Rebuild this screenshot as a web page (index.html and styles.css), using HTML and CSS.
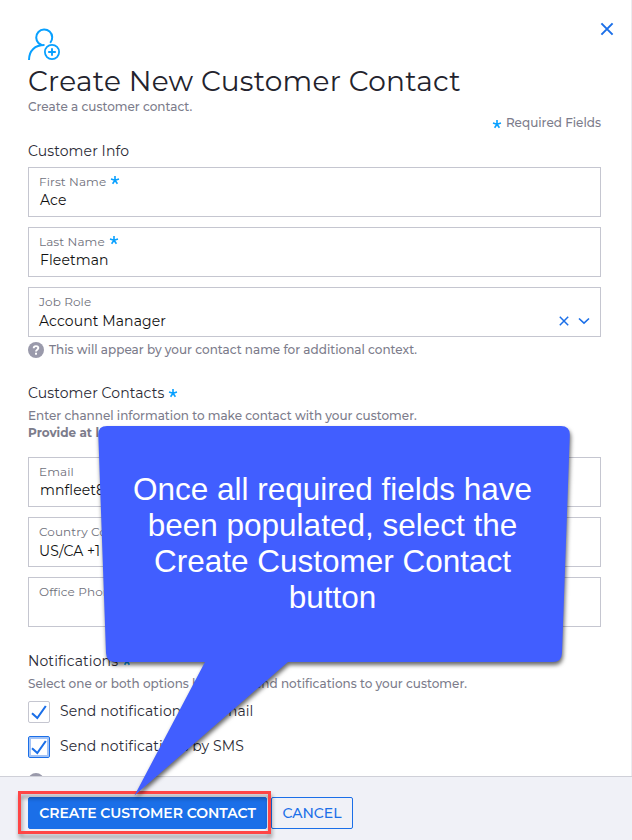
FILE: index.html
```html
<!DOCTYPE html>
<html lang="en">
<head>
    <meta charset="UTF-8">
    <meta name="viewport" content="width=device-width, initial-scale=1.0">
    <title>Create New Customer Contact</title>
    <link rel="stylesheet" href="styles.css">
</head>
<body>

    <svg class="defs">
        <symbol id="star" viewBox="0 0 10 10">
            <path d="M5 5.2V1M5 5.2L1 4M5 5.2L9 4M5 5.2L2.6 8.7M5 5.2L7.4 8.7" fill="none" stroke="#08a0ff" stroke-width="1.6"/>
        </symbol>
        <symbol id="help" viewBox="0 0 16 16">
            <circle cx="8" cy="8" r="8" fill="#9a9aab"/>
            <path d="M5.7 6.2C5.7 3.4 10.3 3.5 10.3 6.1C10.3 7.7 8 7.7 8 9.4" fill="none" stroke="#fff" stroke-width="1.9"/>
            <rect x="7" y="10.7" width="2" height="2" fill="#fff"/>
        </symbol>
        <symbol id="check" viewBox="1 1 20 20">
            <path d="M4 12.2L9.3 17L17.8 5" fill="none" stroke="#1b6fe8" stroke-width="2.1"/>
        </symbol>
    </svg>

    <div class="panel">
        <div class="top">
            <svg class="user-icon" viewBox="0 0 32 32">
                <path d="M22.2 14.8A8 8 0 1 0 10.6 15.2L13.4 16.9M16.5 17C7 17 1 22.5 1 32" fill="none" stroke="#08a0ff" stroke-width="2"/>
                <circle cx="24" cy="24" r="7.1" fill="none" stroke="#08a0ff" stroke-width="1.8"/>
                <path d="M24 20.2V27.800M20.2 24H27.800" stroke="#08a0ff" stroke-width="1.9"/>
            </svg>
            <svg class="close" viewBox="0 0 14 14">
                <path d="M1.4 1.4L12.6 12.6M12.6 1.4L1.4 12.6" stroke="#1b6fe8" stroke-width="2"/>
            </svg>
        </div>
        <h1 class="title">Create New Customer Contact</h1>
        <p class="small subtitle">Create a customer contact.</p>
        <p class="small required"><svg class="star"><use href="#star"/></svg>Required Fields</p>

        <h2 class="heading">Customer Info</h2>
        <div class="fields">
            <div class="field">
                <label class="label">First Name <svg class="star"><use href="#star"/></svg></label>
                <div class="value">Ace</div>
            </div>
            <div class="field">
                <label class="label">Last Name <svg class="star"><use href="#star"/></svg></label>
                <div class="value">Fleetman</div>
            </div>
            <div class="field">
                <label class="label">Job Role</label>
                <div class="value select">
                    <span>Account Manager</span>
                    <span class="controls">
                        <svg width="10" height="10" viewBox="0 0 10 10"><path d="M.8 .8L9.2 9.2M9.2 .8L.8 9.2" stroke="#1b6fe8" stroke-width="1.5"/></svg>
                        <svg width="12" height="8" viewBox="0 0 12 8"><path d="M1 1.5L6 6.2L11 1.5" fill="none" stroke="#1b6fe8" stroke-width="1.6"/></svg>
                    </span>
                </div>
            </div>
        </div>
        <p class="small help"><svg class="help-icon"><use href="#help"/></svg>This will appear by your contact name for additional context.</p>

        <h2 class="heading contacts">Customer Contacts <svg class="star"><use href="#star"/></svg></h2>
        <p class="small channel">Enter channel information to make contact with your customer.</p>
        <p class="small provide">Provide at least one.</p>
        <div class="fields">
            <div class="field">
                <label class="label">Email</label>
                <div class="value">mnfleet8</div>
            </div>
            <div class="field">
                <label class="label">Country Code</label>
                <div class="value select">US/CA +1</div>
            </div>
            <div class="field">
                <label class="label">Office Phone</label>
            </div>
        </div>

        <h2 class="heading notifications">Notifications <svg class="star"><use href="#star"/></svg></h2>
        <p class="small options">Select one or both options below to send notifications to your customer.</p>
        <div class="check-row">
            <svg class="checkbox"><use href="#check"/></svg>
            <span>Send notifications by Email</span>
        </div>
        <div class="check-row">
            <svg class="checkbox focused"><use href="#check"/></svg>
            <span>Send notifications by SMS</span>
        </div>
        <svg class="help-icon"><use href="#help"/></svg>
    </div>

    <div class="footer">
        <button class="btn primary">CREATE CUSTOMER CONTACT</button>
        <button class="btn cancel">CANCEL</button>
    </div>

    <div class="highlight"></div>

    <svg class="callout-shape" viewBox="0 0 632 840">
        <path d="M107 426H561Q570 426 569.8 435L562 653Q561.6 662 553 662H288L134.5 795.5L205 662H115Q106.4 662 106 653L98.3 435Q98 426 107 426Z" fill="#415eff"/>
    </svg>
    <div class="callout-text">Once all required fields have been populated, select the Create Customer Contact button</div>

</body>
</html>
```
FILE: styles.css
```css
* {
    box-sizing: border-box;
}

body {
    margin: 0;
    height: 840px;
    position: relative;
    overflow: hidden;
    background-color: #fff;
    font-family: Montserrat, Inter, sans-serif;
    letter-spacing: .1px;
    color: #2b2b36;
}

h1, h2, p {
    margin: 0;
    font-weight: 400;
}

svg {
    display: block;
    flex: none;
}

.defs {
    display: none;
}

.panel {
    height: 776px;
    padding: 28px 30px 0 28px;
    border-right: 1px solid #ececf0;
    overflow: hidden;
}

.top {
    display: flex;
    justify-content: space-between;
    height: 35px;
}

.user-icon {
    width: 32px;
    height: 32px;
}

.close {
    width: 14px;
    height: 14px;
    margin: -6px -13px 0 0;
}

.title {
    font-size: 28px;
    line-height: 36px;
    letter-spacing: .26px;
    white-space: nowrap;
    color: #23232d;
}

.small {
    font-size: 12px;
    font-weight: 500;
    line-height: 16px;
    letter-spacing: 0;
    color: #7c7c8b;
    white-space: nowrap;
}

.star {
    width: 10px;
    height: 10px;
}

.required {
    display: flex;
    align-items: center;
    justify-content: flex-end;
    gap: 4px;
}

.required .star {
    margin-top: 2px;
}

.heading {
    display: flex;
    align-items: center;
    gap: 4px;
    margin-top: 10px;
    font-size: 14px;
    line-height: 20px;
}

.fields {
    display: flex;
    flex-direction: column;
    gap: 10px;
    margin-top: 6px;
}

.field {
    height: 50px;
    padding: 6px 10px 0;
    border: 1px solid #c5c6d0;
}

.label {
    display: flex;
    gap: 4px;
    font-size: 12px;
    line-height: 16px;
    color: #70717c;
}

.label .star {
    margin-top: 1px;
}

.value {
    padding-left: 1px;
    font-size: 14px;
    line-height: 20px;
    color: #111;
}

.select {
    display: flex;
    justify-content: space-between;
    padding: 1px 0 0;
}

.controls {
    display: flex;
    align-items: center;
    gap: 9px;
}

.help {
    display: flex;
    gap: 5px;
    margin-top: 5px;
}

.help-icon {
    width: 16px;
    height: 16px;
}

.contacts {
    margin-top: 25px;
}

.channel {
    margin-top: 5px;
}

.provide {
    margin: 1px 0 16px;
    font-weight: 700;
}

.notifications {
    margin-top: 24px;
}

.options {
    margin: 5px 0 9px;
}

.check-row {
    display: flex;
    gap: 10px;
    height: 22px;
    margin-bottom: 13px;
    font-size: 14px;
    line-height: 20px;
}

.checkbox {
    width: 22px;
    height: 22px;
    border: 1px solid #c5c6d0;
    border-radius: 2px;
}

.focused {
    border-color: #1b6fe8;
    box-shadow: inset 0 0 0 2px #a3c3f6;
}

.check-row + .help-icon {
    margin-top: 15px;
}

.footer {
    display: flex;
    gap: 4px;
    height: 64px;
    padding: 20px 28px 0;
    border-top: 1px solid #cfd0d8;
    background-color: #f0f1f7;
}

.btn {
    height: 32px;
    padding: 0;
    border: 1px solid #1b6fe8;
    border-radius: 2px;
    font-family: inherit;
    font-size: 14px;
    white-space: nowrap;
}

.primary {
    width: 239px;
    background-color: #1b6fe8;
    color: #fff;
    font-weight: 600;
    letter-spacing: -.03px;
}

.cancel {
    width: 82px;
    background-color: transparent;
    color: #1b6fe8;
    font-weight: 500;
}

/* red frame around the main button */
.highlight {
    position: absolute;
    left: 18px;
    top: 791px;
    width: 253px;
    height: 43px;
    border: 3px solid #ff4545;
    filter: drop-shadow(1px 4px 2px rgba(0, 0, 0, .4));
}

.callout-shape {
    position: absolute;
    left: 0;
    top: 0;
    width: 632px;
    height: 840px;
    filter: drop-shadow(1px 3px 2px rgba(0, 0, 0, .6));
}

.callout-text {
    position: absolute;
    left: 122px;
    top: 471px;
    width: 421px;
    font-family: "Liberation Sans", Arial, sans-serif;
    font-size: 31.5px;
    line-height: 36px;
    letter-spacing: 0;
    text-align: center;
    color: #fff;
}
```
